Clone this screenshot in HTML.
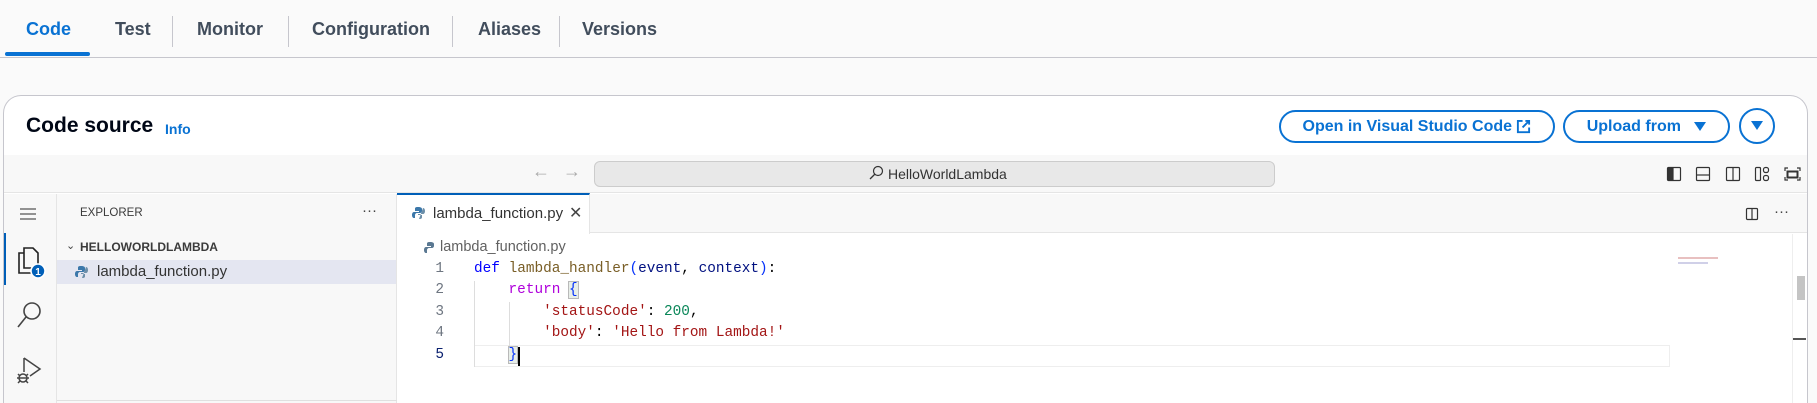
<!DOCTYPE html>
<html><head><meta charset="utf-8"><style>
*{box-sizing:border-box;margin:0;padding:0}
html{width:1817px;height:403px;overflow:hidden}
body{width:1817px;height:403px;overflow:hidden;background:#fafafa;font-family:"Liberation Sans",sans-serif;position:relative}
.a{position:absolute}
.tab{position:absolute;top:19px;font-size:18px;font-weight:bold;color:#414d5c}
.div{position:absolute;top:16px;width:1px;height:31px;background:#c6c6cd}
.btn{position:absolute;top:110px;height:33px;border:2px solid #0972d3;border-radius:17px;color:#0972d3;font-weight:bold;font-size:16px;display:flex;align-items:center;justify-content:center;background:#fff}
.mono{font-family:"Liberation Mono",monospace;font-size:14.4px}
.ln{position:absolute;width:30px;text-align:right;left:414px;color:#6e7681}
.code{position:absolute;left:474px;white-space:pre;color:#000}
</style></head><body>
<div class="tab" style="left:26px;color:#0972d3">Code</div>
<div class="a" style="left:5px;top:52px;width:85px;height:4px;background:#0972d3;border-radius:2px"></div>
<div class="div" style="left:172px"></div>
<div class="tab" style="left:115px">Test</div>
<div class="div" style="left:288px"></div>
<div class="tab" style="left:197px">Monitor</div>
<div class="div" style="left:452px"></div>
<div class="tab" style="left:312px">Configuration</div>
<div class="div" style="left:559px"></div>
<div class="tab" style="left:478px">Aliases</div>
<div class="tab" style="left:582px">Versions</div>
<div class="a" style="left:0;top:57px;width:1817px;height:1px;background:#c6c6cd"></div>

<div class="a" style="left:3px;top:95px;width:1805px;height:308px;background:#fff;border:1px solid #c6c6cd;border-bottom:none;border-radius:18px 18px 0 0;overflow:hidden">
</div>
<div class="a" style="left:26px;top:114px;font-size:21px;font-weight:bold;color:#000716">Code source</div>
<div class="a" style="left:165px;top:121px;font-size:14px;font-weight:bold;color:#0972d3">Info</div>
<div class="btn" style="left:1279px;width:276px">Open in Visual Studio Code&nbsp;<svg width="15" height="15" viewBox="0 0 16 16"><path d="M7 2H2v12h12V9" fill="none" stroke="#0972d3" stroke-width="2"/><path d="M10 2h4v4M14 2L7 9" fill="none" stroke="#0972d3" stroke-width="2"/></svg></div>
<div class="btn" style="left:1563px;width:167px">Upload from&nbsp;&nbsp;&nbsp;<svg width="12" height="10"><path d="M0 0h12L6 9z" fill="#0972d3"/></svg></div>
<div class="btn" style="left:1739px;width:36px;height:36px;top:108px;border-radius:50%"><svg width="12" height="10"><path d="M0 0h12L6 9z" fill="#0972d3"/></svg></div>

<div class="a" style="left:4px;top:155px;width:1803px;height:38px;background:#f8f8f8;border-bottom:1px solid #e5e5e5"></div>
<div class="a" style="left:532px;top:161px;font-size:18px;color:#aaa">&#8592;</div>
<div class="a" style="left:563px;top:161px;font-size:18px;color:#aaa">&#8594;</div>
<div class="a" style="left:594px;top:161px;width:681px;height:26px;background:#e8e8e8;border:1px solid #ccc;border-radius:6px"></div>
<svg class="a" style="left:868px;top:165px" width="16" height="16"><circle cx="10" cy="6" r="4.5" fill="none" stroke="#333" stroke-width="1.2"/><path d="M7 9L2 14" stroke="#333" stroke-width="1.3"/></svg>
<div class="a" style="left:888px;top:166px;font-size:14px;color:#333">HelloWorldLambda</div>
<svg class="a" style="left:1666px;top:165px" width="140" height="18" fill="none" stroke="#333" stroke-width="1.2">
<rect x="1.5" y="2.5" width="13" height="13" rx="1"/><rect x="2" y="3" width="5" height="12" fill="#333"/>
<rect x="30.5" y="2.5" width="13" height="13" rx="1"/><path d="M31 10h12"/>
<rect x="60.5" y="2.5" width="13" height="13" rx="1"/><path d="M67 3v12"/>
<rect x="89.5" y="2.5" width="5" height="13" rx="1"/><rect x="97.5" y="2.5" width="5" height="5" rx="2"/><rect x="97.5" y="10.5" width="5" height="5" rx="2"/>
<path d="M119 6V3h3M131 3h3v3M134 12v3h-3M122 15h-3v-3"/><rect x="121.5" y="6.5" width="10" height="6" stroke-width="2"/>
</svg>

<div class="a" style="left:4px;top:194px;width:53px;height:209px;background:#f8f8f8;border-right:1px solid #e5e5e5"></div>
<svg class="a" style="left:19px;top:207px" width="18" height="14" stroke="#555" stroke-width="1.3"><path d="M1 2h16M1 7h16M1 12h16"/></svg>
<div class="a" style="left:4px;top:233px;width:2px;height:52px;background:#005fb8"></div>
<svg class="a" style="left:16px;top:244px" width="30" height="36" fill="none" stroke="#222" stroke-width="1.6"><path d="M8 4h9l5 5v15H8z"/><path d="M8 9H3v20h13v-5"/><circle cx="22" cy="27" r="7" fill="#005fb8" stroke="#fff"/><text x="22" y="31" font-size="10" fill="#fff" stroke="none" font-family="Liberation Sans" font-weight="bold" text-anchor="middle">1</text></svg>
<svg class="a" style="left:16px;top:300px" width="28" height="30" fill="none" stroke="#444" stroke-width="1.6"><circle cx="16" cy="11" r="8"/><path d="M10 17L2 27"/></svg>
<svg class="a" style="left:14px;top:355px" width="30" height="32" fill="none" stroke="#444" stroke-width="1.5"><path d="M10 3v14M10 3l16 11-10 7"/><circle cx="9" cy="23" r="4"/><path d="M3 23h12M4 19l2 2M14 19l-2 2M4 28l2-2M14 28l-2-2"/></svg>

<div class="a" style="left:57px;top:194px;width:340px;height:209px;background:#f8f8f8;border-right:1px solid #e5e5e5"></div>
<div class="a" style="left:80px;top:207px;font-size:11.5px;color:#3b3b3b">EXPLORER</div>
<div class="a" style="left:362px;top:202px;font-size:15px;color:#444">···</div>
<div class="a" style="left:66px;top:239px;font-size:11px;color:#444">&#8964;</div>
<div class="a" style="left:80px;top:240px;font-size:12px;font-weight:bold;color:#3b3b3b">HELLOWORLDLAMBDA</div>
<div class="a" style="left:57px;top:260px;width:339px;height:24px;background:#e4e6f1"></div>
<svg class="a" style="left:75px;top:265px" width="13" height="13"><path d="M6 1c-3 0-3 1-3 2v2h4v1H2c-1 0-2 1-2 3s1 3 2 3h1V9c0-1 1-2 2-2h3c1 0 2-1 2-2V3c0-1-1-2-4-2z" fill="#3c78aa"/><path d="M7 12c3 0 3-1 3-2V8H6V7h5c1 0 2-1 2-3s-1-3-2-3" fill="#6d8fa9" transform="translate(0 1)"/></svg>
<div class="a" style="left:97px;top:263px;font-size:15px;color:#333">lambda_function.py</div>
<div class="a" style="left:57px;top:400px;width:340px;height:1px;background:#e0e0e0"></div>

<div class="a" style="left:397px;top:194px;width:1410px;height:39px;background:#f8f8f8;border-bottom:1px solid #e5e5e5"></div>
<div class="a" style="left:397px;top:193px;width:193px;height:41px;background:#fff;border-top:2px solid #005fb8;border-right:1px solid #e5e5e5"></div>
<svg class="a" style="left:412px;top:206px" width="13" height="13"><path d="M6 1c-3 0-3 1-3 2v2h4v1H2c-1 0-2 1-2 3s1 3 2 3h1V9c0-1 1-2 2-2h3c1 0 2-1 2-2V3c0-1-1-2-4-2z" fill="#3c78aa"/><path d="M7 12c3 0 3-1 3-2V8H6V7h5c1 0 2-1 2-3s-1-3-2-3" fill="#6d8fa9" transform="translate(0 1)"/></svg>
<div class="a" style="left:433px;top:205px;font-size:15px;color:#333">lambda_function.py</div>
<div class="a" style="left:569px;top:203px;font-size:16px;color:#444">✕</div>
<svg class="a" style="left:1745px;top:207px" width="14" height="14" fill="none" stroke="#333" stroke-width="1.2"><rect x="1.5" y="1.5" width="11" height="11" rx="1"/><path d="M7 2v10"/></svg>
<div class="a" style="left:1774px;top:203px;font-size:15px;color:#444">···</div>

<svg class="a" style="left:424px;top:241px" width="12" height="13"><path d="M6 1c-3 0-3 1-3 2v2h4v1H2c-1 0-2 1-2 3s1 3 2 3h1V9c0-1 1-2 2-2h3c1 0 2-1 2-2V3c0-1-1-2-4-2z" fill="#5a7892"/></svg>
<div class="a" style="left:440px;top:239px;font-size:14.5px;color:#616161">lambda_function.py</div>

<div class="a" style="left:474px;top:345px;width:1196px;height:22px;border:1px solid #eee"></div>
<div class="a" style="left:474px;top:281px;width:1px;height:86px;background:#ddd"></div>
<div class="a" style="left:509px;top:302px;width:1px;height:44px;background:#ddd"></div>
<div class="mono">
<div class="ln" style="top:261px">1</div>
<div class="ln" style="top:282px">2</div>
<div class="ln" style="top:304px">3</div>
<div class="ln" style="top:325px">4</div>
<div class="ln" style="top:347px;color:#0b216f">5</div>
<div class="code" style="top:261px"><span style="color:#0000ff">def</span> <span style="color:#795e26">lambda_handler</span><span style="color:#0431fa">(</span><span style="color:#001080">event</span>, <span style="color:#001080">context</span><span style="color:#0431fa">)</span>:</div>
<div class="code" style="top:282px">    <span style="color:#af00db">return</span> <span style="color:#0431fa;background:#e8eee8;outline:1px solid #b9b9b9">{</span></div>
<div class="code" style="top:304px">        <span style="color:#a31515">'statusCode'</span>: <span style="color:#098658">200</span>,</div>
<div class="code" style="top:325px">        <span style="color:#a31515">'body'</span>: <span style="color:#a31515">'Hello from Lambda!'</span></div>
<div class="code" style="top:347px">    <span style="color:#0431fa;background:#e8eee8;outline:1px solid #b9b9b9">}</span></div>
</div>
<div class="a" style="left:518px;top:347px;width:2px;height:19px;background:#000"></div>
<div class="a" style="left:1678px;top:257px;width:40px;height:2px;background:#e8c0c0"></div>
<div class="a" style="left:1678px;top:262px;width:30px;height:2px;background:#d0d0e8"></div>
<div class="a" style="left:1792px;top:234px;width:14px;height:169px;border-left:1px solid #eee"></div>
<div class="a" style="left:1797px;top:276px;width:8px;height:24px;background:#c4c4c4"></div>
<div class="a" style="left:1793px;top:338px;width:13px;height:2px;background:#555"></div>
</body></html>
